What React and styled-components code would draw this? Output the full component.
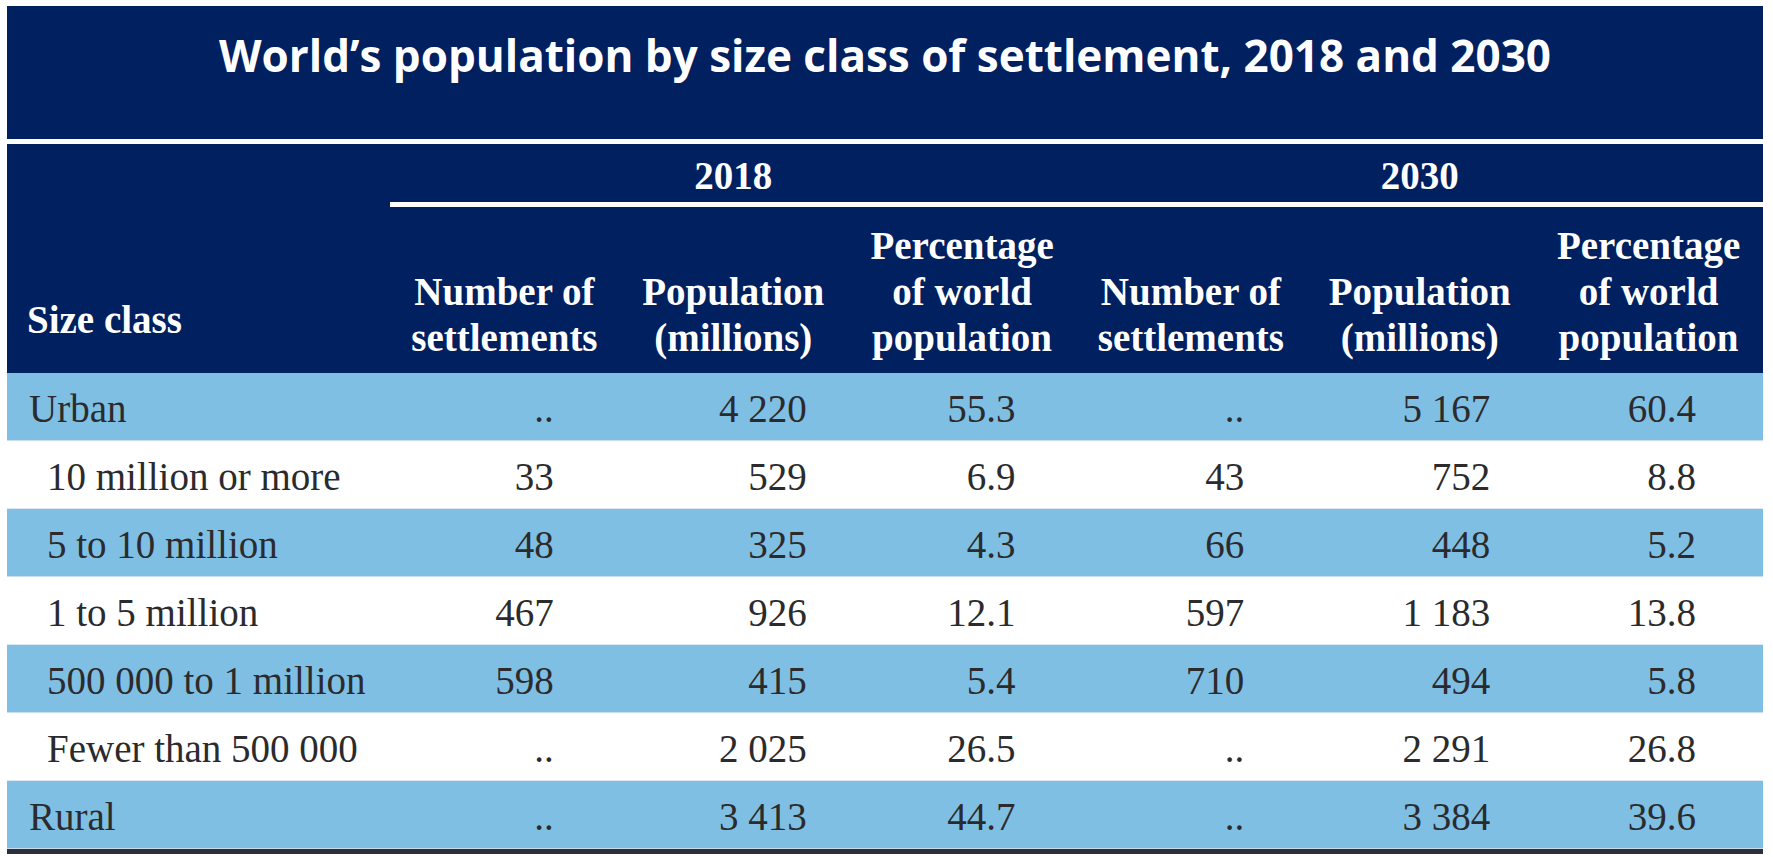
import React from 'react'
import styled, { createGlobalStyle } from 'styled-components'

const GlobalStyle = createGlobalStyle`
  body {
    margin: 0;
    background: #ffffff;
  }
`

const NAVY = '#012060'
const BLUE = '#80bfe4'
const INK = '#2b2b2d'

const Page = styled.div`
  padding: 6px 10px 0 7px;
`

const Table = styled.div`
  width: 1756px;
`

const TitleBar = styled.div`
  height: 133px;
  box-sizing: border-box;
  padding-top: 23px;
  background: ${NAVY};
  color: #ffffff;
  text-align: center;
  font-family: "Open Sans", "Noto Sans", sans-serif;
  font-weight: 700;
  font-size: 44px;
  line-height: 1.2;
  letter-spacing: 0;
`

const Head = styled.div`
  margin-top: 5px;
  height: 229px;
  background: ${NAVY};
  color: #ffffff;
  display: grid;
  grid-template-columns: 383px repeat(6, 1fr);
  grid-template-rows: 63px 1fr;
  font-family: "Liberation Serif", "Times New Roman", serif;
  font-weight: 700;
  font-size: 39px;
`

const SizeClass = styled.div`
  grid-row: 1 / 3;
  align-self: end;
  padding: 0 0 31px 20px;
  line-height: 45px;
`

const Year = styled.div`
  grid-column: span 3;
  border-bottom: 5px solid #ffffff;
  padding-top: 4px;
  display: flex;
  align-items: center;
  justify-content: center;
`

const SubHead = styled.div`
  align-self: end;
  padding-bottom: 12px;
  text-align: center;
  line-height: 46px;
  white-space: nowrap;
`

const Row = styled.div`
  display: grid;
  grid-template-columns: 383px repeat(6, 1fr);
  height: 68px;
  align-items: center;
  background: ${p => (p.$blue ? BLUE : '#ffffff')};
  box-shadow: inset 0 -1px 0 ${p => (p.$blue ? '#c9dded' : '#dbe7f1')};
  color: ${INK};
  font-family: "Liberation Serif", "Times New Roman", serif;
  font-size: 39px;
  padding-top: 3px;
  box-sizing: border-box;
`

const Label = styled.div`
  padding-left: ${p => (p.$top ? 22 : 40)}px;
  white-space: nowrap;
`

const Num = styled.div`
  text-align: right;
  padding-right: ${p => p.$pad}px;
  white-space: nowrap;
`

const BottomRule = styled.div`
  height: 5px;
  background: #2c2f38;
`

const pads = [65, 41, 61, 61, 44, 67]

const subHeads = [
  <>Number of<br />settlements</>,
  <>Population<br />(millions)</>,
  <>Percentage<br />of world<br />population</>,
]

const rows = [
  { label: 'Urban', top: true, blue: true, v: ['..', '4 220', '55.3', '..', '5 167', '60.4'] },
  { label: '10 million or more', v: ['33', '529', '6.9', '43', '752', '8.8'] },
  { label: '5 to 10 million', blue: true, v: ['48', '325', '4.3', '66', '448', '5.2'] },
  { label: '1 to 5 million', v: ['467', '926', '12.1', '597', '1 183', '13.8'] },
  { label: '500 000 to 1 million', blue: true, v: ['598', '415', '5.4', '710', '494', '5.8'] },
  { label: 'Fewer than 500 000', v: ['..', '2 025', '26.5', '..', '2 291', '26.8'] },
  { label: 'Rural', top: true, blue: true, v: ['..', '3 413', '44.7', '..', '3 384', '39.6'] },
]

export default function App() {
  return (
    <Page>
      <GlobalStyle />
      <Table>
        <TitleBar>World’s population by size class of settlement, 2018 and 2030</TitleBar>
        <Head>
          <SizeClass>Size class</SizeClass>
          <Year>2018</Year>
          <Year>2030</Year>
          {[0, 1].map(y =>
            subHeads.map((h, i) => <SubHead key={`${y}-${i}`}>{h}</SubHead>)
          )}
        </Head>
        {rows.map(r => (
          <Row key={r.label} $blue={r.blue}>
            <Label $top={r.top}>{r.label}</Label>
            {r.v.map((n, i) => (
              <Num key={i} $pad={pads[i]}>{n}</Num>
            ))}
          </Row>
        ))}
        <BottomRule />
      </Table>
    </Page>
  )
}
